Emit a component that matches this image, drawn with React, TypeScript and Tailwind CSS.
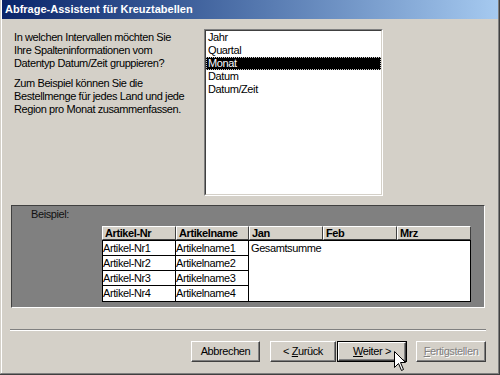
import React from 'react';

const font = { fontFamily: '"Liberation Sans", Arial, sans-serif' };

const items = ['Jahr', 'Quartal', 'Monat', 'Datum', 'Datum/Zeit'];
const cols = [
  { label: 'Artikel-Nr', w: 'w-[74px]' },
  { label: 'Artikelname', w: 'w-[73px]' },
  { label: 'Jan', w: 'w-[74px]' },
  { label: 'Feb', w: 'w-[74px]' },
  { label: 'Mrz', w: 'w-[74px]' },
];
const rows = [1, 2, 3, 4];

const raised =
  'border border-t-white border-l-white border-r-[#404040] border-b-[#404040] shadow-[inset_-1px_-1px_0_#808080]';

function Cursor() {
  return (
    <svg className="absolute left-[394px] top-[351px]" width="13" height="21" viewBox="0 0 13 21">
      <path
        d="M0.5 0.5 L0.5 16.5 L4.5 12.5 L7.5 19.5 L9.5 18.5 L6.5 11.5 L11.5 11.5 Z"
        fill="#fff"
        stroke="#000"
        strokeWidth="1"
      />
    </svg>
  );
}

export default function App() {
  return (
    <div
      style={font}
      className="relative w-[500px] h-[375px] bg-[#d4d0c8] text-[11px] tracking-[-0.4px] text-black border-r border-b border-[#404040] overflow-hidden"
    >
      <div className="h-full border-l border-l-[#d4d0c8] border-r border-r-[#808080] border-b border-b-[#808080] shadow-[inset_1px_0_0_#fff] pl-[1px] flex flex-col">
        <div className="h-[19px] bg-gradient-to-r from-[#0a246a] to-[#a6caf0] flex items-center pl-[3px]">
          <span className="text-white font-bold text-[11px] tracking-normal leading-none">Abfrage-Assistent für Kreuztabellen</span>
        </div>

        <div className="flex-1 flex flex-col pt-[10px] pl-[9px]">
          <div className="flex h-[167px]">
            <div className="w-[193px] pl-[3px] pt-[2px] leading-[13px]">
              <p>
                In welchen Intervallen möchten Sie
                <br />
                Ihre Spalteninformationen vom
                <br />
                Datentyp Datum/Zeit gruppieren?
              </p>
              <p className="mt-[7px]">
                Zum Beispiel können Sie die
                <br />
                Bestellmenge für jedes Land und jede
                <br />
                Region pro Monat zusammenfassen.
              </p>
            </div>
            <div className="w-[179px] h-[167px] border border-t-[#808080] border-l-[#808080] border-r-white border-b-white">
              <div className="h-full bg-white border border-t-[#404040] border-l-[#404040] border-r-[#d4d0c8] border-b-[#d4d0c8]">
                {items.map((it) => (
                  <div
                    key={it}
                    className={
                      it === 'Monat'
                        ? 'h-[13px] leading-[11px] pl-[1px] bg-black text-white border border-dotted border-[#c8c8c8]'
                        : 'h-[13px] leading-[11px] pl-[1px] border border-transparent'
                    }
                  >
                    {it}
                  </div>
                ))}
              </div>
            </div>
          </div>

          <div className="mt-[9px] w-[474px] h-[103px] bg-[#808080] border border-t-[#404040] border-l-[#404040] border-r-white border-b-white">
            <div className="pl-[19px] pt-[2px] leading-[13px] text-[#111]">Beispiel:</div>
            <div className="ml-[90px] mt-[5px] w-[369px]">
              <div className="flex">
                {cols.map((c) => (
                  <div
                    key={c.label}
                    className={`${c.w} h-[14px] bg-[#d4d0c8] font-bold leading-[12px] pl-[2px] border border-t-white border-l-white border-r-[#404040] border-b-[#404040]`}
                  >
                    {c.label}
                  </div>
                ))}
              </div>
              <div className="flex bg-white border border-black">
                <div className="w-[146px]">
                  {rows.map((r) => (
                    <div key={r} className="flex h-[15px] border-b border-black last:border-b-0">
                      <div className="w-[73px] border-r border-black leading-[14px]">Artikel-Nr{r}</div>
                      <div className="w-[73px] border-r border-black leading-[14px]">Artikelname{r}</div>
                    </div>
                  ))}
                </div>
                <div className="flex-1 h-[60px] pl-[2px] leading-[14px]">Gesamtsumme</div>
              </div>
            </div>
          </div>

          <div className="mt-[21px] -ml-[1px] w-[476px] h-[2px] border-t border-t-[#808080] border-b border-b-white" />

          <div className="mt-[10px] flex">
            <button className={`ml-[180px] w-[69px] h-[21px] bg-[#d4d0c8] ${raised}`}>Abbrechen</button>
            <button className={`ml-[10px] w-[66px] h-[21px] bg-[#d4d0c8] ${raised}`}>
              &lt; <span className="underline">Z</span>urück
            </button>
            <div className="ml-[1px] w-[70px] h-[21px] border border-black">
              <button className={`w-full h-full bg-[#d4d0c8] ${raised}`}>
                <span className="underline">W</span>eiter &gt;
              </button>
            </div>
            <button
              className={`ml-[9px] w-[70px] h-[21px] bg-[#d4d0c8] text-[#808080] [text-shadow:1px_1px_0_#fff] ${raised}`}
            >
              <span className="underline">F</span>ertigstellen
            </button>
          </div>
        </div>
      </div>
      <Cursor />
    </div>
  );
}
